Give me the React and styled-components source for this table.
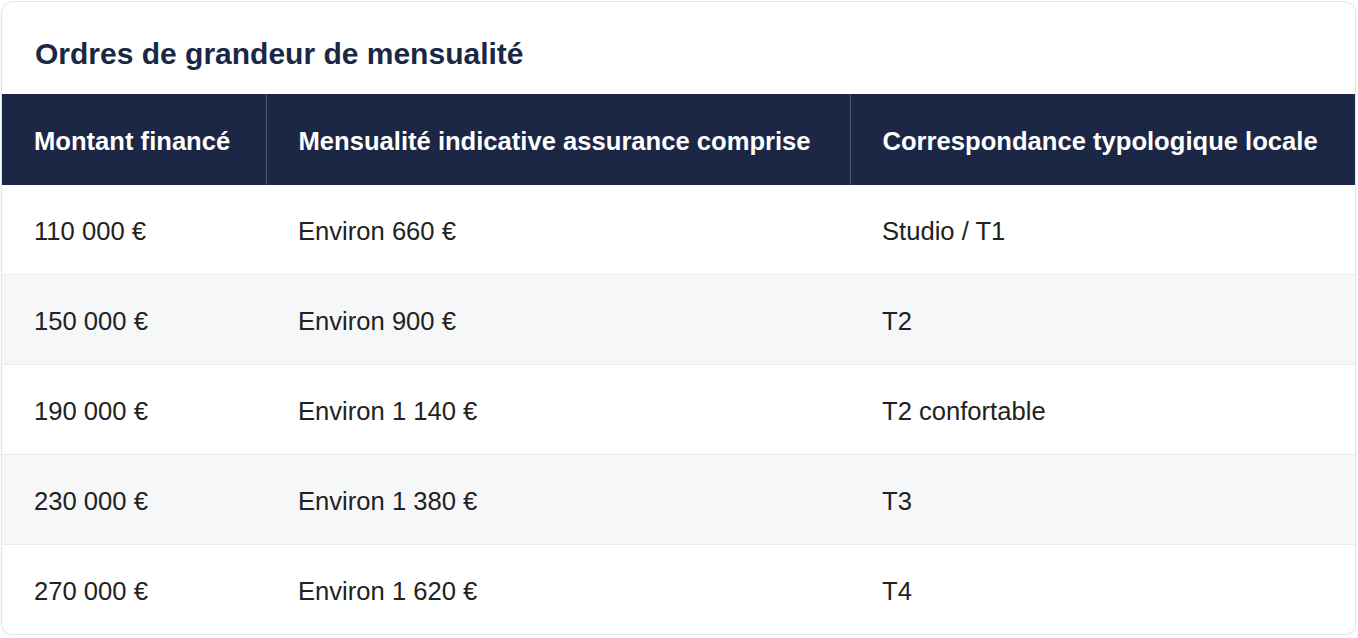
import React from 'react';
import styled, { createGlobalStyle } from 'styled-components';

const GlobalStyle = createGlobalStyle`
  html, body {
    margin: 0;
    padding: 0;
    background: #ffffff;
  }
  body {
    font-family: "Liberation Sans", Arial, Helvetica, sans-serif;
    -webkit-font-smoothing: antialiased;
  }
`;

const rows = [
  { amount: '110 000 €', monthly: 'Environ 660 €', type: 'Studio / T1' },
  { amount: '150 000 €', monthly: 'Environ 900 €', type: 'T2' },
  { amount: '190 000 €', monthly: 'Environ 1 140 €', type: 'T2 confortable' },
  { amount: '230 000 €', monthly: 'Environ 1 380 €', type: 'T3' },
  { amount: '270 000 €', monthly: 'Environ 1 620 €', type: 'T4' },
];

export default function App() {
  return (
    <>
      <GlobalStyle />
      <Card>
        <Title>Ordres de grandeur de mensualité</Title>
        <Table>
          <colgroup>
            <col style={{ width: 264 }} />
            <col style={{ width: 584 }} />
            <col />
          </colgroup>
          <thead>
            <tr>
              <HeadCell>Montant financé</HeadCell>
              <HeadCell>Mensualité indicative assurance comprise</HeadCell>
              <HeadCell>Correspondance typologique locale</HeadCell>
            </tr>
          </thead>
          <tbody>
            {rows.map((row, i) => (
              <Row key={row.amount} striped={i % 2 === 1} last={i === rows.length - 1}>
                <Cell>{row.amount}</Cell>
                <Cell>{row.monthly}</Cell>
                <Cell>{row.type}</Cell>
              </Row>
            ))}
          </tbody>
        </Table>
      </Card>
    </>
  );
}

const Card = styled.div`
  box-sizing: border-box;
  width: 1355px;
  margin: 1px 0 0 1px;
  background: #ffffff;
  border: 1px solid #e3e6ea;
  border-radius: 12px;
  box-shadow: 0 1px 2px rgba(16, 24, 40, 0.08);
  overflow: hidden;
`;

const Title = styled.h2`
  margin: 0;
  padding: 34px 33px 22px;
  font-size: 30px;
  line-height: 36px;
  font-weight: 700;
  color: #1b2845;
`;

const Table = styled.table`
  width: 100%;
  border-collapse: collapse;
  table-layout: fixed;
`;

const HeadCell = styled.th`
  background: #1c2745;
  color: #ffffff;
  text-align: left;
  font-size: 25.6px;
  font-weight: 700;
  line-height: 38.4px;
  padding: 28px 32px 25px;
  border-right: 1px solid #4b5570;
  white-space: nowrap;

  &:last-child {
    border-right: none;
  }
`;

const Row = styled.tr.withConfig({
  shouldForwardProp: (prop) => !['striped', 'last'].includes(prop),
})`
  background: ${(props) => (props.striped ? '#f6f7f9' : '#ffffff')};
  border-bottom: ${(props) => (props.last ? 'none' : '1px solid #e9ebef')};
`;

const Cell = styled.td`
  font-size: 25.6px;
  line-height: 38.4px;
  color: #222222;
  padding: 27px 32px 23.6px;
  white-space: nowrap;
`;
